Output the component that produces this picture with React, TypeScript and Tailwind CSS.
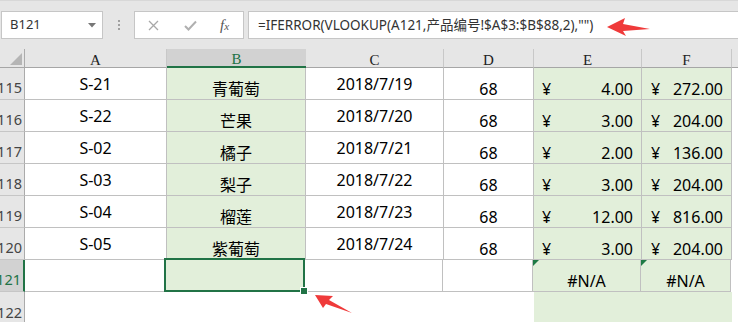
import React from 'react'

type Row = [string, string, string, string, string, string, string]

const rows: Row[] = [
  ['115', 'S-21', '青葡萄', '2018/7/19', '68', '4.00', '272.00'],
  ['116', 'S-22', '芒果', '2018/7/20', '68', '3.00', '204.00'],
  ['117', 'S-02', '橘子', '2018/7/21', '68', '2.00', '136.00'],
  ['118', 'S-03', '梨子', '2018/7/22', '68', '3.00', '204.00'],
  ['119', 'S-04', '榴莲', '2018/7/23', '68', '12.00', '816.00'],
  ['120', 'S-05', '紫葡萄', '2018/7/24', '68', '3.00', '204.00'],
]

const sans = "font-['Noto_Sans','Noto_Sans_CJK_SC',sans-serif]"

function RowHeader({ n, active = false, last = false }: { n: string; active?: boolean; last?: boolean }) {
  return (
    <div
      className={`w-[25px] h-full shrink-0 flex items-end justify-end overflow-hidden pr-[2px] text-[14.5px] leading-[20px] ${
        active ? 'bg-[#d2d2d2] text-[#217346] border-r-2 border-r-[#217346]' : 'bg-[#e6e6e6] text-[#444] border-r border-r-[#ababab]'
      } ${last ? '' : 'border-b border-b-[#c6c6c6]'}`}
    >
      <span className="whitespace-nowrap pb-[2px]">{n}</span>
    </div>
  )
}

function ColHeader({ label, w, active = false }: { label: string; w: string; active?: boolean }) {
  return (
    <div
      className={`${w} h-full shrink-0 flex items-center justify-center pt-[3px] font-['Liberation_Serif',serif] text-[15px] leading-[18px] ${
        active ? 'bg-[#d2d2d2] text-[#217346] border-b-2 border-b-[#217346]' : 'bg-[#e6e6e6] text-[#222] border-b border-b-[#a6a6a6] border-r border-r-[#c8c8c8]'
      }`}
    >
      {label}
    </div>
  )
}

function ErrorMark() {
  return (
    <svg className="absolute left-0 top-0" width="7" height="7" viewBox="0 0 7 7">
      <polygon points="0,0 6,0 0,6" fill="#1e7a45" />
    </svg>
  )
}

export default function App() {
  const cell = 'h-full shrink-0 border-r border-b border-[#c0c0c0] text-[16px] leading-[20px] text-black'
  return (
    <div className={`relative w-[738px] h-[322px] overflow-hidden bg-white ${sans}`}>
      {/* barra de fórmulas */}
      <div className="h-[49px] bg-[#e6e6e6] border-t border-[#d8d8d8] flex items-start pt-[10px]">
        <div className="ml-[1px] w-[102px] h-[28px] bg-white border border-[#c6c6c6] flex items-center justify-between pl-[8px] pr-[6px]">
          <span className="text-[13px] text-[#333]">B121</span>
          <svg width="8" height="5" viewBox="0 0 8 5">
            <polygon points="0,0 8,0 4,4.5" fill="#777" />
          </svg>
        </div>
        <div className="w-[31px] h-[28px] flex flex-col items-center justify-center gap-[2px]">
          <span className="w-[2px] h-[2px] bg-[#a0a0a0]" />
          <span className="w-[2px] h-[2px] bg-[#a0a0a0]" />
          <span className="w-[2px] h-[2px] bg-[#a0a0a0]" />
        </div>
        <div className="w-[110px] h-[28px] bg-white border border-[#c6c6c6] flex items-center">
          <svg className="ml-[13px]" width="11" height="11" viewBox="0 0 11 11">
            <path d="M1 1 L10 10 M10 1 L1 10" stroke="#a8a8a8" strokeWidth="1.3" />
          </svg>
          <svg className="ml-[25px]" width="13" height="11" viewBox="0 0 13 11">
            <path d="M1 6 L4.5 9.5 L12 1.5" stroke="#b0b0b0" strokeWidth="2" fill="none" />
          </svg>
          <span className="ml-[23px] font-['Liberation_Serif',serif] italic text-[#555] text-[15px] leading-none">
            f<span className="text-[11px]">x</span>
          </span>
        </div>
        <div className="ml-[4px] flex-1 h-[28px] bg-white border border-r-0 border-[#c6c6c6] flex items-center pl-[9px]">
          <span className="text-[13.5px] text-[#333] whitespace-nowrap">
            =IFERROR(VLOOKUP(A121,产品编号!$A$3:$B$88,2),"")
          </span>
        </div>
      </div>

      {/* encabezado de columnas */}
      <div className="flex h-[19px]">
        <div className="w-[25px] h-full shrink-0 bg-[#e6e6e6] border-r border-r-[#ababab] border-b border-b-[#a6a6a6] flex items-end justify-end pr-[2px] pb-[2px]">
          <svg width="12" height="12" viewBox="0 0 12 12">
            <polygon points="12,0 12,12 0,12" fill="#b5b5b5" />
          </svg>
        </div>
        <ColHeader label="A" w="w-[142px]" />
        <ColHeader label="B" w="w-[139px]" active />
        <ColHeader label="C" w="w-[138px]" />
        <ColHeader label="D" w="w-[90px]" />
        <ColHeader label="E" w="w-[108px]" />
        <ColHeader label="F" w="w-[90px]" />
        <div className="flex-1 h-full bg-[#e6e6e6] border-b border-b-[#a6a6a6]" />
      </div>

      {/* filas */}
      {rows.map(([n, a, b, c, d, e, f]) => (
        <div key={n} className="flex h-[32px]">
          <RowHeader n={n} />
          <div className={`${cell} w-[142px] flex items-center justify-center`}>{a}</div>
          <div className={`${cell} w-[139px] bg-[#e2efda] flex items-end justify-center`}>{b}</div>
          <div className={`${cell} w-[138px] flex items-center justify-center`}>{c}</div>
          <div className={`${cell} w-[90px] flex items-end justify-center`}>{d}</div>
          <div className={`${cell} w-[108px] bg-[#e2efda] flex items-end justify-between pl-[8px] pr-[8px]`}>
            <span>¥</span>
            <span>{e}</span>
          </div>
          <div className={`${cell} w-[90px] bg-[#e2efda] flex items-end justify-between pl-[9px] pr-[8px]`}>
            <span>¥</span>
            <span>{f}</span>
          </div>
          <div className="flex-1" />
        </div>
      ))}

      <div className="flex h-[32px]">
        <RowHeader n="121" active />
        <div className={`${cell} w-[141px]`} />
        <div className={`${cell} w-[139px] bg-[#e2efda] relative`}>
          <div className="absolute left-[-2px] top-[-2px] right-[-1px] bottom-[-1px] border-2 border-[#217346]" />
          <div className="absolute left-[134px] top-[27px] w-[8px] h-[8px] bg-[#217346] border border-white" />
        </div>
        <div className={`${cell} w-[138px]`} />
        <div className={`${cell} w-[90px]`} />
        <div className={`${cell} w-[108px] bg-[#e2efda] relative flex items-end justify-center`}>
          <ErrorMark />
          #N/A
        </div>
        <div className={`${cell} w-[90px] bg-[#e2efda] relative flex items-end justify-center`}>
          <ErrorMark />
          #N/A
        </div>
        <div className="flex-1" />
      </div>

      <div className="flex h-[32px]">
        <RowHeader n="122" last />
        <div className="w-[509px] shrink-0" />
        <div className="w-[198px] shrink-0 bg-[#e2efda]" />
        <div className="flex-1" />
      </div>

      {/* flechas */}
      <svg className="absolute left-0 top-0 pointer-events-none" width="738" height="322" viewBox="0 0 738 322">
        <polygon points="607,27 625,18 623,24 650,29 623,31 626,36" fill="#ef3a3a" />
        <polygon points="315,295 333,296 329,300 352,313 326,304 323,308" fill="#ef3a3a" />
      </svg>
    </div>
  )
}
